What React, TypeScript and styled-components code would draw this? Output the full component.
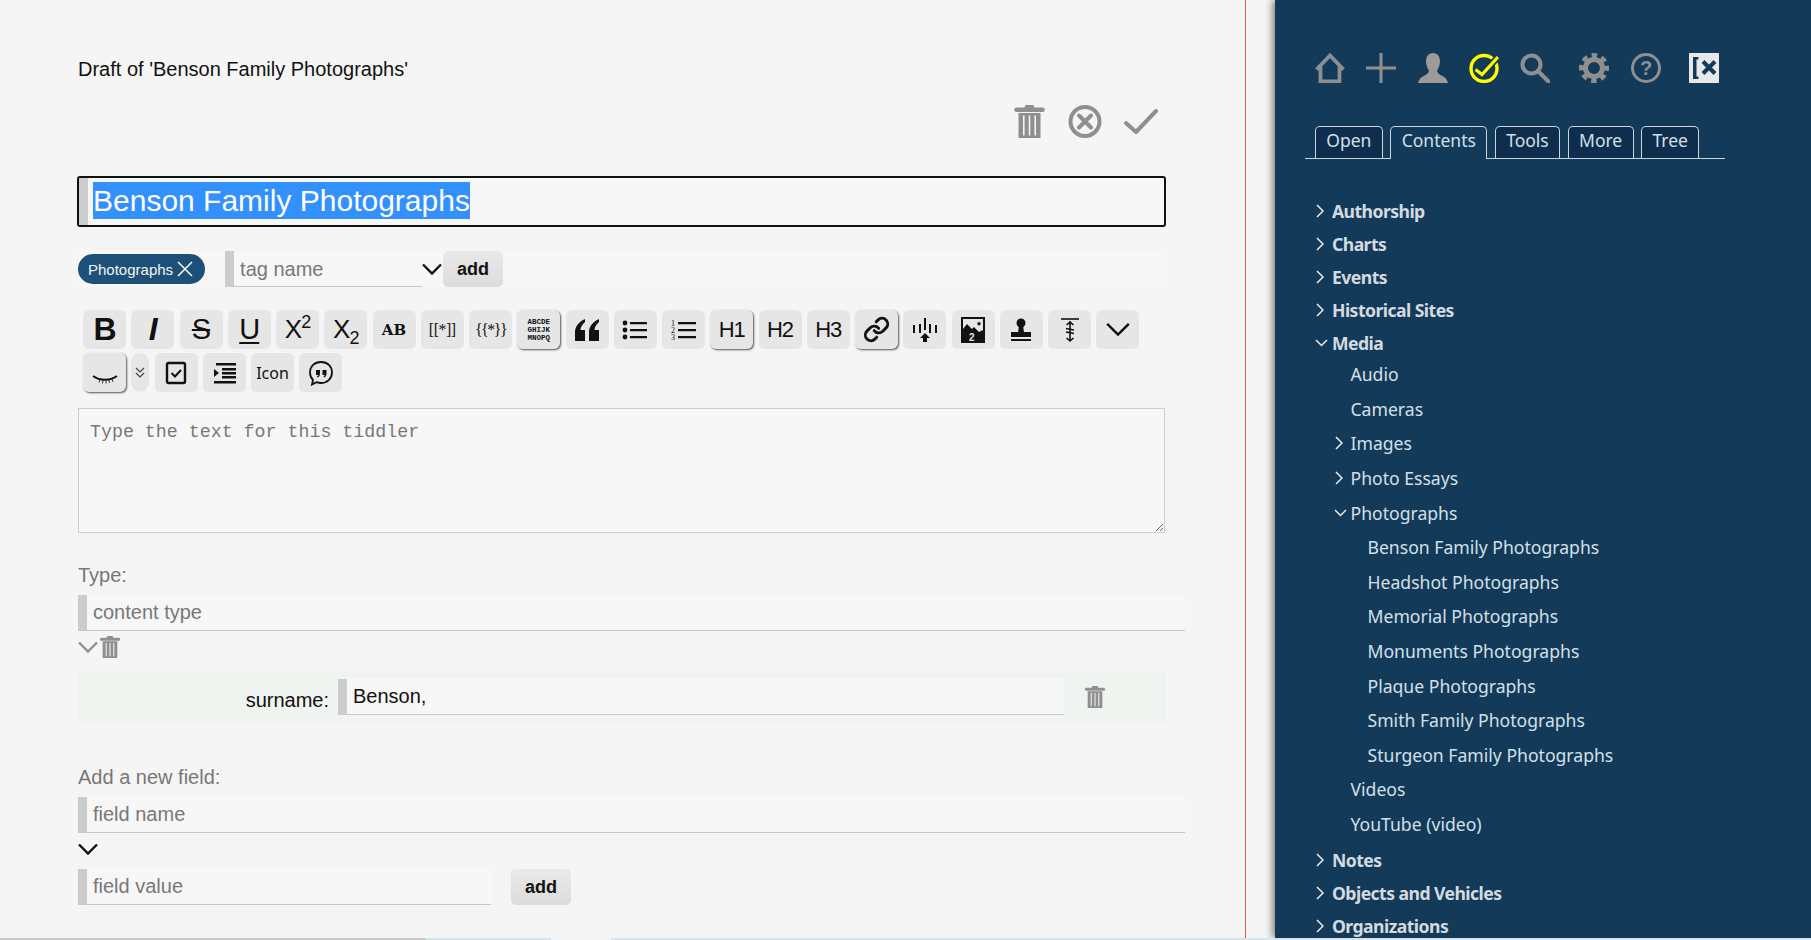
import React from "react";
import styled, { createGlobalStyle } from "styled-components";
import { Link as LinkIcon } from "lucide-react";

const Global = createGlobalStyle`
  html, body {
    margin: 0;
    height: 100%;
    overflow: hidden;
    background: #f5f5f5;
    font-family: "Liberation Sans", Arial, sans-serif;
  }
`;

const Shell = styled.div`
  display: flex;
  justify-content: space-between;
  height: 938px;
`;

const Main = styled.main`
  box-sizing: border-box;
  width: 1246px;
  padding-left: 78px;
  border-right: 1px solid #e8594a;
`;

const Column = styled.div`
  width: 1088px;
`;

const Footer = styled.div`
  display: flex;
  height: 2px;
`;

const FooterPart = styled.span<{ $color: string; $width?: number }>`
  flex: ${(p) => (p.$width ? `0 0 ${p.$width}px` : "1")};
  background: ${(p) => p.$color};
`;

const DraftTitle = styled.div`
  margin-top: 57px;
  font-size: 20px;
  line-height: 24px;
  color: #111;
`;

const ActionBar = styled.div`
  display: flex;
  justify-content: flex-end;
  gap: 22px;
  height: 33px;
  margin-top: 24px;
  padding-right: 8px;
  color: #8f8f8f;
`;

const TitleBox = styled.div`
  box-sizing: border-box;
  display: flex;
  align-items: center;
  height: 51px;
  margin-top: 38px;
  margin-left: -1px;
  border: 2px solid #111;
  border-radius: 3px;
  background: #f7f7f7;
  font-size: 30px;
`;

const TitleGrip = styled.span`
  align-self: stretch;
  width: 9px;
  margin-right: 5px;
  background: #ccc;
`;

const Selected = styled.span`
  margin-top: -2px;
  line-height: 37px;
  background: #3390ff;
  color: #fff;
`;

const TagRow = styled.div`
  display: flex;
  align-items: center;
  height: 36px;
  margin-top: 24px;
  background: #f7f7f7;
`;

const TagPill = styled.span`
  display: inline-flex;
  align-items: center;
  gap: 4px;
  height: 30px;
  padding: 0 12px 0 10px;
  border-radius: 15px;
  background: #1d5078;
  color: #f4f4f4;
  font-size: 15px;
`;

const Field = styled.input<{ $width: number }>`
  box-sizing: border-box;
  width: ${(p) => p.$width}px;
  height: 36px;
  padding: 0 5px 0 6px;
  border: 0;
  border-left: 9px solid #ccc;
  border-bottom: 1px solid #c8c8c8;
  background: #f7f7f7;
  color: #111;
  font: 20px "Liberation Sans", Arial, sans-serif;
  outline: none;
  &::placeholder {
    color: #777;
    opacity: 1;
  }
`;

const TagField = styled(Field)`
  margin-left: 20px;
  padding-top: 2px;
`;

const TagChevron = styled.span`
  display: flex;
  margin-right: 1px;
  color: #111;
`;

const AddButton = styled.button`
  width: 60px;
  height: 36px;
  padding: 0;
  border: 0;
  border-radius: 5px;
  background: linear-gradient(#e9e9e9, #dcdcdc);
  color: #111;
  font: bold 18px "Liberation Sans", Arial, sans-serif;
`;

const ToolRows = styled.div`
  display: flex;
  flex-direction: column;
  gap: 4px;
  margin: 23px 0 0 5px;
`;

const ToolRow = styled.div`
  display: flex;
  gap: 5.25px;
`;

const Tool = styled.span<{ $active?: boolean; $narrow?: boolean }>`
  display: flex;
  align-items: center;
  justify-content: center;
  flex: none;
  width: ${(p) => (p.$narrow ? 18 : 43)}px;
  height: 39px;
  border-radius: ${(p) => (p.$narrow ? 9 : 6)}px;
  background: #e6e6e6;
  color: #111;
  box-shadow: ${(p) => (p.$active ? "1px 1px 2px #555" : "none")};
  font-size: 22px;
  letter-spacing: -1px;
`;

const BigLetter = styled.span`
  font-size: 32px;
  font-weight: bold;
`;

const ItalicLetter = styled(BigLetter)`
  font-style: italic;
`;

const ThinLetter = styled.span<{ $deco: string }>`
  font-size: 29px;
  text-decoration: ${(p) => p.$deco};
  text-decoration-thickness: 1.5px;
  text-underline-offset: 3px;
`;

const Power = styled.span`
  font-size: 26px;
  sup,
  sub {
    font-size: 18px;
    line-height: 0;
  }
`;

const SlabBold = styled.span`
  font: bold 15px "DejaVu Serif", serif;
  letter-spacing: 0;
`;

const SerifTool = styled.span<{ $tight?: boolean }>`
  font: 16px "Liberation Serif", serif;
  letter-spacing: ${(p) => (p.$tight ? "-1.5px" : "-0.5px")};
`;

const CharBlock = styled.span`
  font: bold 7.5px/8px "Liberation Mono", monospace;
  letter-spacing: 0;
  text-align: center;
  white-space: pre;
`;

const IconLabel = styled.span`
  font: 16px "Noto Sans", sans-serif;
  letter-spacing: 0;
`;

const Editor = styled.textarea`
  display: block;
  box-sizing: border-box;
  width: 1087px;
  height: 125px;
  margin-top: 16px;
  padding: 13px 11px;
  border: 1px solid #ccc;
  background: #f7f7f7;
  font: 18.3px "Liberation Mono", monospace;
  resize: vertical;
  outline: none;
  &::placeholder {
    color: #777;
    opacity: 1;
  }
`;

const SectionLabel = styled.div<{ $top: number }>`
  margin-top: ${(p) => p.$top}px;
  margin-bottom: 8px;
  color: #777;
  font-size: 20px;
  line-height: 24px;
`;

const DropRow = styled.div<{ $muted?: boolean }>`
  display: flex;
  align-items: center;
  height: 24px;
  margin: 4px 0 8px;
  gap: 1px;
  color: ${(p) => (p.$muted ? "#8f8f8f" : "#111")};
`;

const FieldBox = styled.div`
  display: flex;
  align-items: center;
  height: 52px;
  margin-top: 12px;
  background: #f0f4f0;
`;

const FieldName = styled.label`
  width: 251px;
  margin-top: 7px;
  color: #111;
  font-size: 20px;
  text-align: right;
`;

const ValueField = styled(Field)`
  margin-left: 9px;
`;

const RowTrash = styled.span`
  display: flex;
  margin-left: 20px;
  color: #8f8f8f;
`;

const ValueRow = styled.div`
  display: flex;
  gap: 20px;
`;

const Sidebar = styled.aside`
  box-sizing: border-box;
  width: 536px;
  padding: 53px 0 0 30px;
  background: #133a58;
  box-shadow: -3px 0 7px rgba(0, 0, 0, 0.45);
  font-family: "Noto Sans", sans-serif;
  overflow: hidden;
`;

const IconBar = styled.div`
  display: flex;
  gap: 21.3px;
  padding-left: 10px;
  color: #8f8f8f;
`;

const IconSlot = styled.span<{ $extra?: number }>`
  display: flex;
  margin-left: ${(p) => p.$extra || 0}px;
`;

const TabBar = styled.div`
  display: flex;
  gap: 7.7px;
  width: 410px;
  height: 32px;
  margin-top: 43px;
  padding-left: 10px;
  border-bottom: 1px solid #c9d6de;
`;

const Tab = styled.span<{ $active?: boolean }>`
  box-sizing: border-box;
  height: ${(p) => (p.$active ? 33 : 32)}px;
  padding: 0 10.3px;
  border: 1px solid #c9d6de;
  border-bottom: 0;
  border-radius: 5px 5px 0 0;
  background: ${(p) => (p.$active ? "#133a58" : "#0f2d4c")};
  color: #cfe0ea;
  font-size: 17.5px;
  line-height: 27px;
`;

const Tree = styled.ul`
  margin: 35px 0 0;
  padding: 0;
  list-style: none;
`;

const SubTree = styled.ul`
  margin: -2px 0 2px;
  padding: 0 0 0 17.5px;
  list-style: none;
`;

const NestedTree = styled(SubTree)`
  margin: 0;
  padding-left: 17px;
`;

const TreeRow = styled.div<{ $bold?: boolean }>`
  display: flex;
  align-items: center;
  height: ${(p) => (p.$bold ? 33 : 34.6)}px;
  padding-left: ${(p) => (p.$bold ? 9 : 10)}px;
  color: ${(p) => (p.$bold ? "#d3dbe0" : "#d3e0e9")};
  font-size: 17.6px;
  font-weight: ${(p) => (p.$bold ? "bold" : "normal")};
  letter-spacing: ${(p) => (p.$bold ? "-0.55px" : "0")};
`;

const Twist = styled.span<{ $open?: boolean }>`
  display: flex;
  flex: none;
  width: 18px;
  padding-left: ${(p) => (p.$open ? 1 : 2)}px;
  box-sizing: border-box;
  color: #e8eef2;
`;

const Trash = ({ size }: { size: number }) => (
  <svg width={size} height={size} viewBox="0 0 30 33" fill="currentColor">
    <path d="M11 0h8l1 2.5h8a1.5 1.5 0 0 1 0 4.5H2a1.5 1.5 0 0 1 0-4.5h8zM4 8h22v25H4zM8.5 10.5v20h1.6v-20zM14.2 10.5v20h1.6v-20zM19.9 10.5v20h1.6v-20z" fillRule="evenodd" />
  </svg>
);

const Cancel = () => (
  <svg width="34" height="33" viewBox="0 0 34 33" fill="none" stroke="currentColor">
    <circle cx="17" cy="16.5" r="14.5" strokeWidth="4" />
    <path d="M11 10.5l12 12M23 10.5l-12 12" strokeWidth="4" strokeLinecap="round" />
  </svg>
);

const Done = () => (
  <svg width="34" height="33" viewBox="0 0 34 33" fill="none" stroke="currentColor">
    <path d="M2 18l10 9L32 6" strokeWidth="4" strokeLinecap="round" strokeLinejoin="round" />
  </svg>
);

const Chevron = ({ size = 20, weight = 2.4 }: { size?: number; weight?: number }) => (
  <svg width={size} height={size * 0.6} viewBox="0 0 20 12" fill="none" stroke="currentColor" strokeWidth={weight}>
    <path d="M1 1.5l9 9 9-9" />
  </svg>
);

const Close = () => (
  <svg width="16" height="16" viewBox="0 0 16 16" stroke="currentColor" strokeWidth="1.6">
    <path d="M1 1l14 14M15 1L1 15" />
  </svg>
);

const QuoteIcon = () => (
  <svg width="26" height="26" viewBox="0 0 26 26" fill="currentColor">
    <path d="M11 2C6 4 1 9 1 15v9h10V13H6.5c0-3 2-6 4.500-8zM25 2c-5 2-10 7-10 13v9h10V13h-4.500c0-3 2-6 4.500-8z" />
  </svg>
);

const BulletIcon = () => (
  <svg width="26" height="26" viewBox="0 0 26 26" fill="currentColor">
    <circle cx="3" cy="6" r="2.4" />
    <circle cx="3" cy="13" r="2.4" />
    <circle cx="3" cy="20" r="2.4" />
    <path d="M8 5h17v2.200H8zM8 12h17v2.200H8zM8 19h17v2.200H8z" />
  </svg>
);

const NumberIcon = () => (
  <svg width="26" height="26" viewBox="0 0 26 26" fill="currentColor">
    <text x="0" y="9" fontSize="8" fontFamily="Liberation Serif">1</text>
    <text x="0" y="16" fontSize="8" fontFamily="Liberation Serif">2</text>
    <text x="0" y="23" fontSize="8" fontFamily="Liberation Serif">3</text>
    <path d="M7 5h18v2.200H7zM7 12h18v2.200H7zM7 19h18v2.200H7z" />
  </svg>
);

const UploadIcon = () => (
  <svg width="26" height="26" viewBox="0 0 26 26" fill="currentColor">
    <path d="M12 1h2v12h-2zM7 7h2v9H7zM17 7h2v9h-2zM1 8h2v8H1zM23 8h2v8h-2zM13 16l5 5h-3v4h-4v-4H8z" />
  </svg>
);

const ImageIcon = () => (
  <svg width="26" height="28" viewBox="0 0 26 28">
    <path fill="currentColor" d="M1 1h24v26H1z" />
    <path fill="#e6e6e6" d="M3 3h20v11l-4 2-5-5-2 2-5-5-4 5zM19 6a1.700 1.700 0 1 0 .01 0" fillRule="evenodd" />
    <text x="9" y="25" fontSize="10" fontWeight="bold" fill="#e6e6e6" fontFamily="Liberation Sans">2</text>
  </svg>
);

const StampIcon = () => (
  <svg width="26" height="26" viewBox="0 0 26 26" fill="currentColor">
    <circle cx="13" cy="6" r="4.5" />
    <path d="M11 9h4l1 6h7v5H3v-5h7zM3 22h20v2H3z" />
  </svg>
);

const ExciseIcon = () => (
  <svg width="26" height="26" viewBox="0 0 26 26" fill="none" stroke="currentColor" strokeWidth="1.6">
    <path d="M4 2h18" />
    <path d="M13 4v20M9.500 8L13 5l3.500 3M9 11.500l8 1.500M9 15l8 1.500M9.500 21l3.500 3 3.500-3" />
  </svg>
);

const ClosedEye = () => (
  <svg width="26" height="26" viewBox="0 0 26 26" fill="none" stroke="currentColor">
    <path d="M1 16c7 5 17 5 24 0" strokeWidth="1.9" />
    <path d="M8 19.500l-1 3M11 20l-.5 3.500M14 20.500v3M17 20l.5 3M20 19l1 3" strokeWidth="0.8" />
  </svg>
);

const DoubleDown = () => (
  <svg width="10" height="12" viewBox="0 0 10 12" fill="none" stroke="#444" strokeWidth="1.2">
    <path d="M1 1l4 4 4-4M1 6l4 4 4-4" />
  </svg>
);

const CheckboxIcon = () => (
  <svg width="22" height="24" viewBox="0 0 22 24" fill="none" stroke="currentColor" strokeWidth="2.4">
    <rect x="2" y="2" width="18" height="20" rx="1.5" />
    <path d="M6.500 12l3.500 3.500 6-6.500" strokeWidth="2" />
  </svg>
);

const IndentIcon = () => (
  <svg width="24" height="22" viewBox="0 0 24 22" fill="currentColor">
    <path d="M4 1h20v2.400H4zM10 6h14v2.400H10zM10 10h14v2.400H10zM10 14h14v2.400H10zM2 19h22v2.400H2zM2 7l5 4-5 4z" />
  </svg>
);

const CommentIcon = () => (
  <svg width="26" height="26" viewBox="0 0 26 26" fill="none" stroke="currentColor" strokeWidth="1.8">
    <path d="M13 2c6.500 0 11 4.300 11 10.500S19 23 13 23c-1.500 0-3-.3-4.500-.8L4 24.500l1-4.500C3 18 2 15.500 2 12.500 2 6.300 6.500 2 13 2z" />
    <path fill="currentColor" stroke="none" d="M8 10h4v4c0 1.500-1 3-2.500 3.500l-.5-1c.7-.4 1.200-1 1.200-1.500H8zM14.500 10h4v4c0 1.500-1 3-2.500 3.500l-.5-1c.7-.4 1.200-1 1.200-1.500h-2.200z" />
  </svg>
);

const HomeIcon = () => (
  <svg width="30" height="30" viewBox="0 0 30 30" fill="none" stroke="currentColor" strokeWidth="3.8">
    <path d="M1.500 16.500L15 2.500l13.500 14M5.500 13v15.500h19V13" />
  </svg>
);

const PlusIcon = () => (
  <svg width="30" height="30" viewBox="0 0 30 30" fill="currentColor">
    <path d="M13.500 0h3v13.500H30v3H16.500V30h-3V16.500H0v-3h13.500z" />
  </svg>
);

const UserIcon = () => (
  <svg width="30" height="30" viewBox="0 0 30 30" fill="#9b9b9b">
    <path d="M15 0c4.500 0 7 3.500 7 8.500 0 3.500-1.500 7-3 9 .5 3 2.500 4 5.500 5.500 2.500 1 4.500 3.500 5.500 7H0c1-3.500 3-6 5.500-7 3-1.500 5-2.500 5.500-5.500-1.500-2-3-5.500-3-9C8 3.500 10.500 0 15 0z" />
  </svg>
);

const TasksIcon = () => (
  <svg width="30" height="30" viewBox="0 0 30 30" fill="none" stroke="#ffff00" strokeWidth="3.4">
    <circle cx="15" cy="15.500" r="13" />
    <path d="M6.500 16.500l6.500 5L29 4" stroke="#133a58" strokeWidth="6.500" />
    <path d="M6.500 16.500l6.500 5L29 4" strokeWidth="3.200" />
  </svg>
);

const SearchIcon = () => (
  <svg width="30" height="30" viewBox="0 0 30 30" fill="none" stroke="currentColor" strokeWidth="4">
    <circle cx="11.500" cy="11.500" r="9" />
    <path d="M18 18l10.500 10.500" strokeLinecap="round" />
  </svg>
);

const GearIcon = () => (
  <svg width="30" height="30" viewBox="0 0 30 30" fill="none" stroke="currentColor">
    <circle cx="15" cy="15" r="8.500" strokeWidth="5" />
    <circle cx="15" cy="15" r="12.500" strokeWidth="5" strokeDasharray="5.400 4.420" strokeDashoffset="2.700" />
  </svg>
);

const HelpIcon = () => (
  <svg width="30" height="30" viewBox="0 0 30 30" fill="none" stroke="currentColor" strokeWidth="3">
    <circle cx="15" cy="15" r="13.500" />
    <text x="15" y="22" fontSize="20" fontWeight="bold" textAnchor="middle" fill="currentColor" stroke="none" fontFamily="Liberation Sans">?</text>
  </svg>
);

const HideIcon = () => (
  <svg width="30" height="30" viewBox="0 0 30 30">
    <rect width="30" height="30" fill="#e8e8e8" />
    <path fill="#133a58" d="M4 4h5.500v2.500H7.500v17h2V26H4z" />
    <path stroke="#133a58" strokeWidth="4" d="M14 8.500l12 12M26 8.500l-12 12" />
  </svg>
);

type Node = { name: string; open?: boolean; more?: boolean; kids?: Node[] };

const topics: Node[] = [
  { name: "Authorship", more: true },
  { name: "Charts", more: true },
  { name: "Events", more: true },
  { name: "Historical Sites", more: true },
  {
    name: "Media",
    open: true,
    kids: [
      { name: "Audio" },
      { name: "Cameras" },
      { name: "Images", more: true },
      { name: "Photo Essays", more: true },
      {
        name: "Photographs",
        open: true,
        kids: [
          { name: "Benson Family Photographs" },
          { name: "Headshot Photographs" },
          { name: "Memorial Photographs" },
          { name: "Monuments Photographs" },
          { name: "Plaque Photographs" },
          { name: "Smith Family Photographs" },
          { name: "Sturgeon Family Photographs" },
        ],
      },
      { name: "Videos" },
      { name: "YouTube (video)" },
    ],
  },
  { name: "Notes", more: true },
  { name: "Objects and Vehicles", more: true },
  { name: "Organizations", more: true },
];

const TreeItem = ({ node, top }: { node: Node; top?: boolean }) => {
  const Kids = top ? SubTree : NestedTree;
  return (
    <li>
      <TreeRow $bold={top}>
        <Twist $open={node.open}>
          {node.more && (
            <svg width="8" height="14" viewBox="0 0 8 14" fill="none" stroke="currentColor" strokeWidth="1.500">
              <path d="M1 1l6 6-6 6" />
            </svg>
          )}
          {node.open && (
            <svg width="13" height="8" viewBox="0 0 13 8" fill="none" stroke="currentColor" strokeWidth="1.500">
              <path d="M1 1l5.500 5.500L12 1" />
            </svg>
          )}
        </Twist>
        {node.name}
      </TreeRow>
      {node.kids && (
        <Kids>
          {node.kids.map((kid) => (
            <TreeItem key={kid.name} node={kid} />
          ))}
        </Kids>
      )}
    </li>
  );
};

const App = () => (
  <>
    <Global />
    <Shell>
      <Main>
        <Column>
          <DraftTitle>Draft of 'Benson Family Photographs'</DraftTitle>
          <ActionBar>
            <Trash size={33} />
            <Cancel />
            <Done />
          </ActionBar>
          <TitleBox>
            <TitleGrip />
            <Selected>Benson Family Photographs</Selected>
          </TitleBox>
          <TagRow>
            <TagPill>
              Photographs
              <Close />
            </TagPill>
            <TagField $width={197} placeholder="tag name" />
            <TagChevron>
              <Chevron />
            </TagChevron>
            <AddButton>add</AddButton>
          </TagRow>
          <ToolRows>
            <ToolRow>
              <Tool><BigLetter>B</BigLetter></Tool>
              <Tool><ItalicLetter>I</ItalicLetter></Tool>
              <Tool><ThinLetter $deco="line-through">S</ThinLetter></Tool>
              <Tool><ThinLetter $deco="underline">U</ThinLetter></Tool>
              <Tool><Power>X<sup>2</sup></Power></Tool>
              <Tool><Power>X<sub>2</sub></Power></Tool>
              <Tool><SlabBold>AB</SlabBold></Tool>
              <Tool><SerifTool>[[*]]</SerifTool></Tool>
              <Tool><SerifTool $tight>{"{{*}}"}</SerifTool></Tool>
              <Tool $active><CharBlock>{"ABCDE\nGHIJK\nMNOPQ"}</CharBlock></Tool>
              <Tool><QuoteIcon /></Tool>
              <Tool><BulletIcon /></Tool>
              <Tool><NumberIcon /></Tool>
              <Tool $active>H1</Tool>
              <Tool>H2</Tool>
              <Tool>H3</Tool>
              <Tool $active><LinkIcon size={27} strokeWidth={2.6} /></Tool>
              <Tool><UploadIcon /></Tool>
              <Tool><ImageIcon /></Tool>
              <Tool><StampIcon /></Tool>
              <Tool><ExciseIcon /></Tool>
              <Tool><Chevron size={24} weight={2} /></Tool>
            </ToolRow>
            <ToolRow>
              <Tool $active><ClosedEye /></Tool>
              <Tool $narrow><DoubleDown /></Tool>
              <Tool><CheckboxIcon /></Tool>
              <Tool><IndentIcon /></Tool>
              <Tool><IconLabel>Icon</IconLabel></Tool>
              <Tool><CommentIcon /></Tool>
            </ToolRow>
          </ToolRows>
          <Editor placeholder="Type the text for this tiddler" />
          <SectionLabel $top={30}>Type:</SectionLabel>
          <Field $width={1107} placeholder="content type" />
          <DropRow $muted>
            <Chevron />
            <Trash size={22} />
          </DropRow>
          <FieldBox>
            <FieldName>surname:</FieldName>
            <ValueField $width={726} defaultValue="Benson," />
            <RowTrash>
              <Trash size={22} />
            </RowTrash>
          </FieldBox>
          <SectionLabel $top={42}>Add a new field:</SectionLabel>
          <Field $width={1107} placeholder="field name" />
          <DropRow>
            <Chevron />
          </DropRow>
          <ValueRow>
            <Field $width={413} placeholder="field value" />
            <AddButton>add</AddButton>
          </ValueRow>
        </Column>
      </Main>
      <Sidebar>
        <IconBar>
          <IconSlot><HomeIcon /></IconSlot>
          <IconSlot><PlusIcon /></IconSlot>
          <IconSlot><UserIcon /></IconSlot>
          <IconSlot><TasksIcon /></IconSlot>
          <IconSlot><SearchIcon /></IconSlot>
          <IconSlot $extra={8}><GearIcon /></IconSlot>
          <IconSlot><HelpIcon /></IconSlot>
          <IconSlot $extra={7}><HideIcon /></IconSlot>
        </IconBar>
        <TabBar>
          <Tab>Open</Tab>
          <Tab $active>Contents</Tab>
          <Tab>Tools</Tab>
          <Tab>More</Tab>
          <Tab>Tree</Tab>
        </TabBar>
        <Tree>
          {topics.map((topic) => (
            <TreeItem key={topic.name} node={topic} top />
          ))}
        </Tree>
      </Sidebar>
    </Shell>
    <Footer>
      <FooterPart $color="#c8c8c8" $width={426} />
      <FooterPart $color="#d6e5ea" $width={125} />
      <FooterPart $color="#eff3f4" $width={60} />
      <FooterPart $color="#d6e5ea" />
    </Footer>
  </>
);

export default App;
